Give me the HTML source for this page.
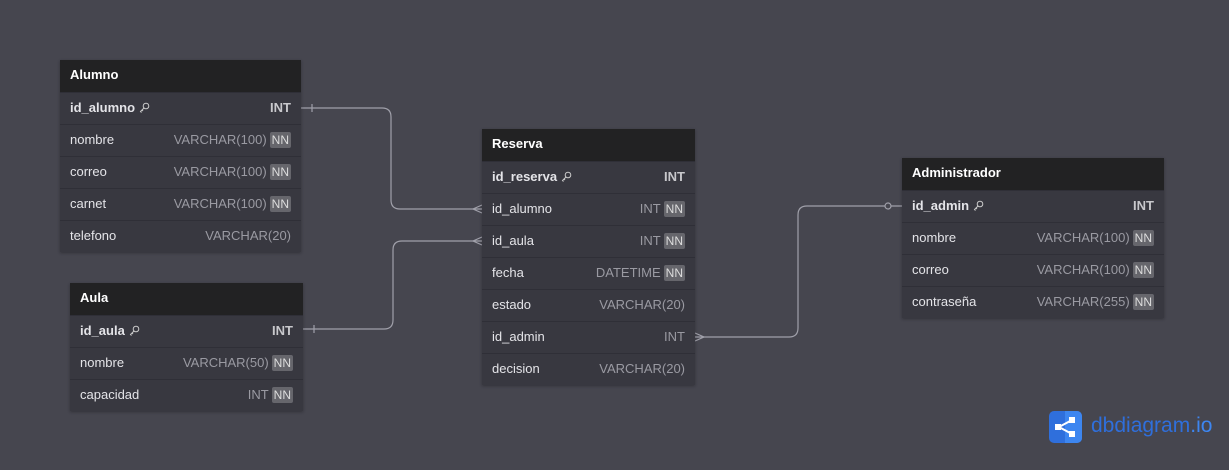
<!DOCTYPE html>
<html><head><meta charset="utf-8"><style>
*{margin:0;padding:0;box-sizing:border-box}
body{width:1229px;height:470px;background:#46464f;font-family:"Liberation Sans",sans-serif;position:relative;overflow:hidden}
.t{position:absolute;background:#383840;box-shadow:0 1px 3px rgba(0,0,0,.3)}
.h{height:32px;background:#222223;color:#fff;font-weight:bold;font-size:13px;line-height:29px;padding-left:10px}
.r{height:32px;line-height:29px;font-size:13px;color:#e4e4e8;padding:0 10px;display:flex;justify-content:space-between;align-items:flex-start;border-top:1px solid #2f2f37}
.r:first-of-type{border-top:none}
.r>span{display:flex;align-items:center;height:29px}
.k{font-weight:bold}
.ty{color:#9a9aa2}
.k .ty{color:#c8c8cc}
.nn{background:#66666c;color:#ddd;font-size:12px;line-height:16px;padding:0 2px;margin-left:3px;border-radius:2px}
svg.l{position:absolute;left:0;top:0}
.kk{margin-left:4px}
</style></head><body>
<svg class="l" width="1229" height="470" fill="none" stroke="#a0a0aa" stroke-width="1.2">
<path d="M301 108 H382 Q391 108 391 117 V200 Q391 209 400 209 H482"/>
<path d="M312 104 V112"/><path d="M482 205 L473 209 L482 213"/>
<path d="M303 329 H384 Q393 329 393 320 V250 Q393 241 402 241 H482"/>
<path d="M314 325 V333"/><path d="M482 237 L473 241 L482 245"/>
<path d="M695 337 H789 Q798 337 798 328 V215 Q798 206 807 206 H902"/>
<path d="M695 333 L704 337 L695 341"/>
<circle cx="888" cy="206" r="3" fill="#46464f"/>
</svg>

<div class="t" style="left:60px;top:60px;width:241px">
<div class="h">Alumno</div>
<div class="r k"><span>id_alumno<svg class="kk" width="11" height="11" viewBox="0 0 11 11" fill="none" stroke="#ccc" stroke-width="1"><circle cx="7" cy="4" r="2.8"/><path d="M5 6 L1.5 9.5 L2.5 10.5 M3 8 L4 9"/></svg></span><span class="ty">INT</span></div>
<div class="r"><span>nombre</span><span class="ty">VARCHAR(100)<span class="nn">NN</span></span></div>
<div class="r"><span>correo</span><span class="ty">VARCHAR(100)<span class="nn">NN</span></span></div>
<div class="r"><span>carnet</span><span class="ty">VARCHAR(100)<span class="nn">NN</span></span></div>
<div class="r"><span>telefono</span><span class="ty">VARCHAR(20)</span></div>
</div>

<div class="t" style="left:70px;top:283px;width:233px">
<div class="h">Aula</div>
<div class="r k"><span>id_aula<svg class="kk" width="11" height="11" viewBox="0 0 11 11" fill="none" stroke="#ccc" stroke-width="1"><circle cx="7" cy="4" r="2.8"/><path d="M5 6 L1.5 9.5 L2.5 10.5 M3 8 L4 9"/></svg></span><span class="ty">INT</span></div>
<div class="r"><span>nombre</span><span class="ty">VARCHAR(50)<span class="nn">NN</span></span></div>
<div class="r"><span>capacidad</span><span class="ty">INT<span class="nn">NN</span></span></div>
</div>

<div class="t" style="left:482px;top:129px;width:213px">
<div class="h">Reserva</div>
<div class="r k"><span>id_reserva<svg class="kk" width="11" height="11" viewBox="0 0 11 11" fill="none" stroke="#ccc" stroke-width="1"><circle cx="7" cy="4" r="2.8"/><path d="M5 6 L1.5 9.5 L2.5 10.5 M3 8 L4 9"/></svg></span><span class="ty">INT</span></div>
<div class="r"><span>id_alumno</span><span class="ty">INT<span class="nn">NN</span></span></div>
<div class="r"><span>id_aula</span><span class="ty">INT<span class="nn">NN</span></span></div>
<div class="r"><span>fecha</span><span class="ty">DATETIME<span class="nn">NN</span></span></div>
<div class="r"><span>estado</span><span class="ty">VARCHAR(20)</span></div>
<div class="r"><span>id_admin</span><span class="ty">INT</span></div>
<div class="r"><span>decision</span><span class="ty">VARCHAR(20)</span></div>
</div>

<div class="t" style="left:902px;top:158px;width:262px">
<div class="h">Administrador</div>
<div class="r k"><span>id_admin<svg class="kk" width="11" height="11" viewBox="0 0 11 11" fill="none" stroke="#ccc" stroke-width="1"><circle cx="7" cy="4" r="2.8"/><path d="M5 6 L1.5 9.5 L2.5 10.5 M3 8 L4 9"/></svg></span><span class="ty">INT</span></div>
<div class="r"><span>nombre</span><span class="ty">VARCHAR(100)<span class="nn">NN</span></span></div>
<div class="r"><span>correo</span><span class="ty">VARCHAR(100)<span class="nn">NN</span></span></div>
<div class="r"><span>contraseña</span><span class="ty">VARCHAR(255)<span class="nn">NN</span></span></div>
</div>

<div style="position:absolute;left:1049px;top:411px;width:33px;height:32px;border-radius:5px;background:#2f6fdc;overflow:hidden">
<div style="position:absolute;left:16px;top:0;width:17px;height:32px;background:#3d86f0"></div>
<svg width="33" height="32" style="position:absolute;left:0;top:0"><path d="M23 9 L10 16 L23 23" stroke="#fff" stroke-width="2" fill="none"/><rect x="20" y="6" width="6" height="6" fill="#fff"/><rect x="6" y="13" width="6" height="6" fill="#fff"/><rect x="20" y="20" width="6" height="6" fill="#fff"/></svg>
</div>
<div style="position:absolute;left:1091px;top:413px;font-size:21px;color:#2f6fdc;line-height:26px">dbdiagram<span style="color:#3d86f0">.io</span></div>
</body></html>
